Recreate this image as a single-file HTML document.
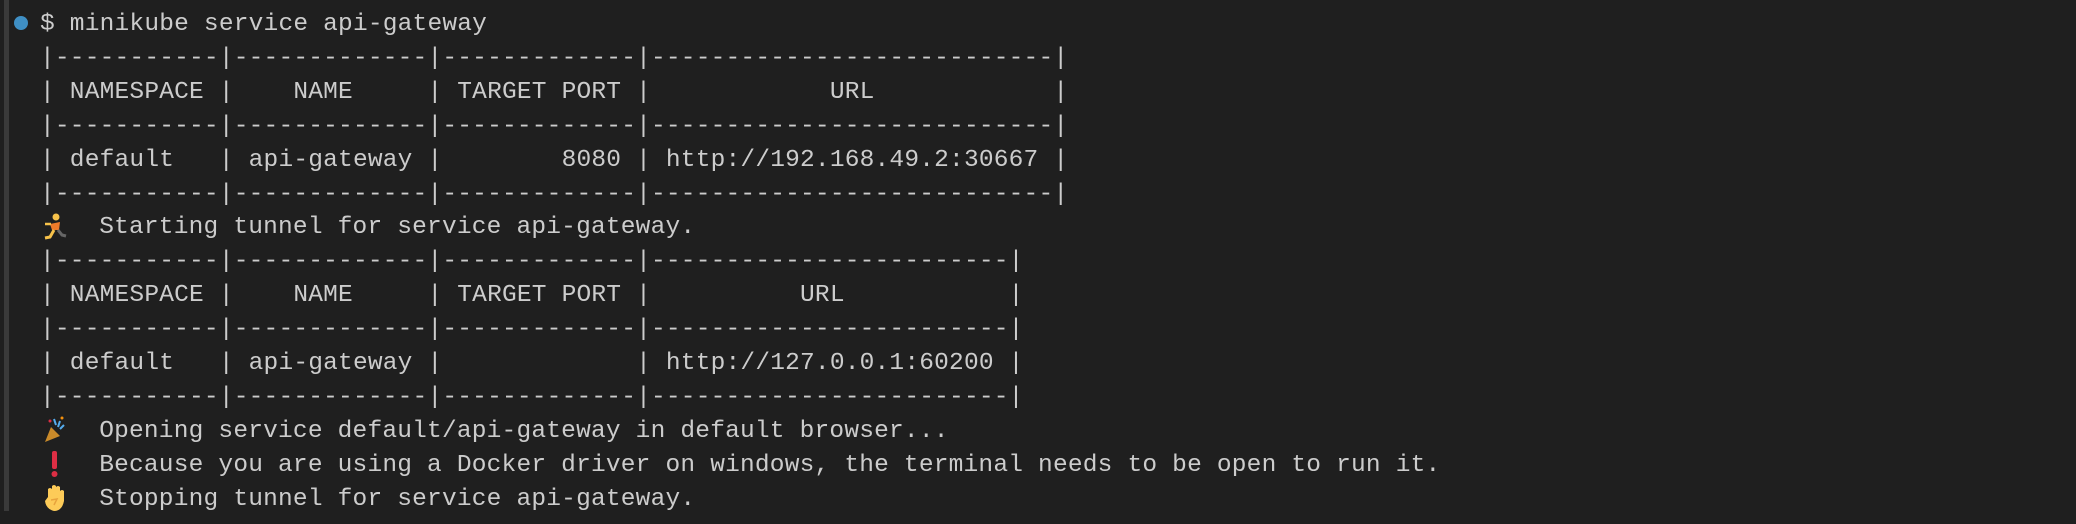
<!DOCTYPE html>
<html><head><meta charset="utf-8"><style>
html,body{margin:0;padding:0;background:#1f1f1f;width:2076px;height:524px;overflow:hidden;position:relative}
.bar{position:absolute;left:4px;top:0;width:5px;height:511px;background:#3a3a3a}
.dot{position:absolute;left:14px;top:16px;width:14px;height:14px;border-radius:50%;background:#3f8fc4}
pre{position:absolute;left:40px;top:8px;margin:0;font-family:"Liberation Mono",monospace;font-size:24.5px;letter-spacing:0.2px;line-height:33.9px;color:#cccccc;white-space:pre}
.e{display:inline-block;width:2ch;position:relative;vertical-align:middle;height:30px}
</style></head><body>
<div class="bar"></div>
<div class="dot"></div>
<pre>$ minikube service api-gateway
|-----------|-------------|-------------|---------------------------|
| NAMESPACE |    NAME     | TARGET PORT |            URL            |
|-----------|-------------|-------------|---------------------------|
| default   | api-gateway |        8080 | http://192.168.49.2:30667 |
|-----------|-------------|-------------|---------------------------|
<span class="e"><svg width="26" height="30" viewBox="0 0 26 30" style="position:absolute;left:2px;top:0"><circle cx="14" cy="5" r="3.5" fill="#f7c24a"/><path d="M8 12 L18 10 L17 18 L10 18 Z" fill="#f07b2a"/><path d="M3 12 L9 12" stroke="#f7c24a" stroke-width="2.5"/><path d="M12 18 L8 25 L3 26" stroke="#f7c24a" stroke-width="3" fill="none"/><path d="M16 18 L20 23 L24 24" stroke="#666" stroke-width="3" fill="none"/></svg></span>  Starting tunnel for service api-gateway.
|-----------|-------------|-------------|------------------------|
| NAMESPACE |    NAME     | TARGET PORT |          URL           |
|-----------|-------------|-------------|------------------------|
| default   | api-gateway |             | http://127.0.0.1:60200 |
|-----------|-------------|-------------|------------------------|
<span class="e"><svg width="26" height="30" viewBox="0 0 26 30" style="position:absolute;left:2px;top:0"><path d="M3 27 L9 12 L18 21 Z" fill="#c98a2a"/><path d="M12 4 L14 10 M18 6 L16 12 M22 10 L18 14" stroke="#55acee" stroke-width="2"/><circle cx="20" cy="3" r="1.5" fill="#f4900c"/><circle cx="8" cy="6" r="1.5" fill="#dd2e44"/></svg></span>  Opening service default/api-gateway in default browser...
<span class="e"><svg width="26" height="30" viewBox="0 0 26 30" style="position:absolute;left:2px;top:0"><rect x="10" y="2" width="5" height="18" rx="2" fill="#dd2e44"/><circle cx="12.5" cy="25" r="3" fill="#dd2e44"/></svg></span>  Because you are using a Docker driver on windows, the terminal needs to be open to run it.
<span class="e"><svg width="26" height="30" viewBox="0 0 26 30" style="position:absolute;left:2px;top:0"><path d="M6 14 L6 6 Q8 4 10 6 L10 3 Q12 1 14 3 L14 4 Q16 2 18 4 L18 8 Q20 6 22 8 L22 18 Q20 28 12 28 Q4 26 3 18 Z" fill="#fdcb58"/><path d="M9 17 L15 16 L12 22" stroke="#e8a33d" stroke-width="1.5" fill="none"/></svg></span>  Stopping tunnel for service api-gateway.</pre>
</body></html>
